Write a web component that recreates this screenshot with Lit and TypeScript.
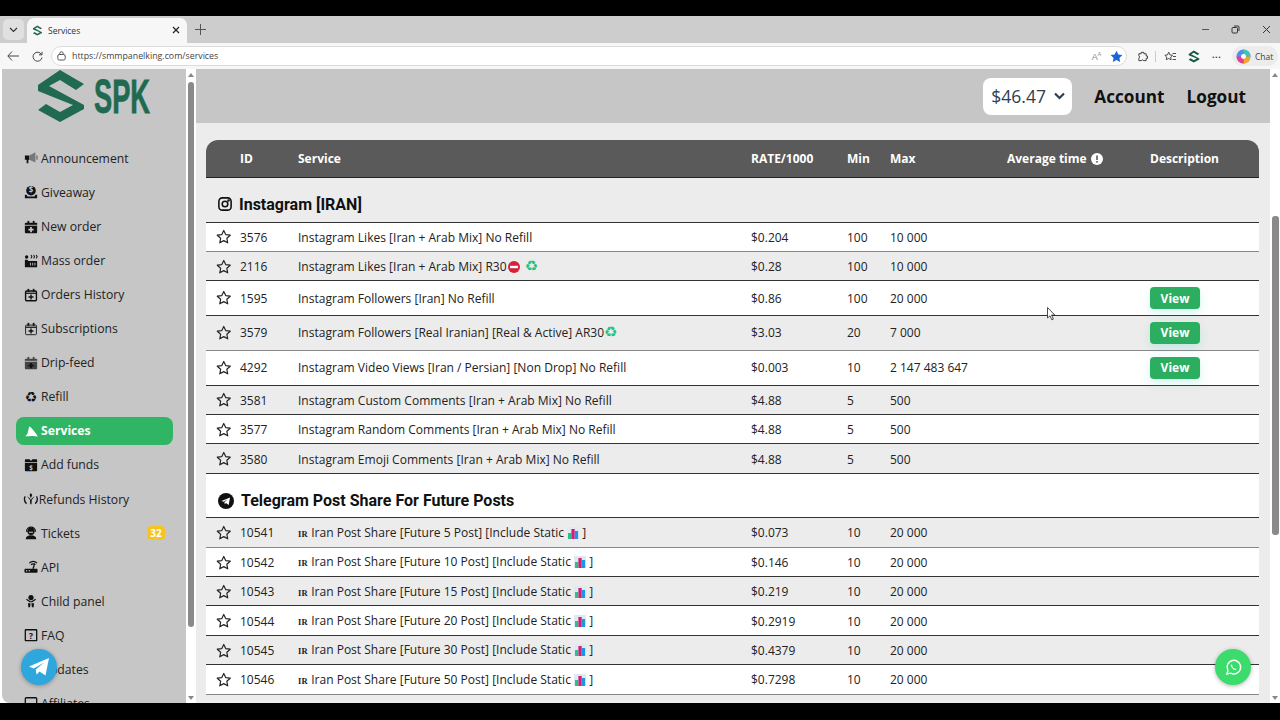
import { LitElement, html, css, svg } from "lit";
import { customElement } from "lit/decorators.js";

const I = (w: number, body: unknown, cls = "ic") =>
  html`<svg class=${cls} viewBox="0 0 ${w} 16" width=${(w * 14) / 16} height="14" fill="currentColor">${body}</svg>`;

const cal = svg`<path d="M2 3h12a1 1 0 0 1 1 1v10a1 1 0 0 1-1 1H2a1 1 0 0 1-1-1V4a1 1 0 0 1 1-1z"/><rect x="4" y="1" width="2" height="3"/><rect x="10" y="1" width="2" height="3"/>`;
const plusW = svg`<path d="M7 8h2v2h2v2H9v2H7v-2H5v-2h2z" fill="#c6c6c6"/>`;
const calLine = (sw: number) => svg`<rect x="1.8" y="3.5" width="12.4" height="11" rx="1" fill="none" stroke="currentColor" stroke-width=${sw}/><path d="M2 6h12" stroke="currentColor" stroke-width="1.4"/><rect x="4" y="1" width="2" height="3.5"/><rect x="10" y="1" width="2" height="3.5"/><path d="M7.2 7.5h1.6v2h2V11h-2v2H7.2v-2h-2V9.5h2z"/>`;

const icons: Record<string, unknown> = {
  Announcement: I(16, svg`<path d="M1 5h5v5l-1 .3V14H3v-4H1z"/><path d="M6 5l7-3.5V13L6 10z" fill="#777"/><rect x="14" y="5" width="1.6" height="5" fill="#777"/>`),
  Giveaway: I(16, svg`<circle cx="8" cy="6.5" r="5.5"/><text x="8" y="9.6" font-size="9" font-weight="700" font-family="Open Sans" text-anchor="middle" fill="#c6c6c6">$</text><path d="M1 11h2l1 2h8l1-2h2v4H1z"/>`),
  "New order": I(16, svg`${cal}<rect x="1" y="5.5" width="14" height="1" fill="#c6c6c6"/>${plusW}`),
  "Mass order": I(16, svg`<circle cx="3" cy="3.5" r="2"/><path d="M8 1l1 2-1 2M11 1l1 2-1 2M14 1l1 2-1 2" fill="none" stroke="currentColor" stroke-width="1.2"/><path d="M1 6.5h3l1 1.5h10v7H1z"/><path d="M7 10h1v3H7zM9.5 10h1v3h-1zM12 10h1v3h-1z" fill="#c6c6c6"/>`),
  "Orders History": I(16, calLine(1.6)),
  Subscriptions: I(16, calLine(1)),
  "Drip-feed": I(16, svg`<g fill="#444">${cal}</g><rect x="1" y="5.5" width="14" height="1" fill="#c6c6c6"/><path d="M7 8h2v2h2v2H9v2H7v-2H5v-2h2z" fill="#111"/>`),
  Refill: html`<span class="ic glyph">♻</span>`,
  Services: I(16, svg`<path d="M1 14c2-1 3-3 3.500-5C5 7 5.500 4 6 2.500c3 2 6 6 8.500 9.500.4.800.8 1.500 1 2.500-2-.8-4.500-1-7-.8-2.500.2-5 .6-7.500.3z"/>`),
  "Add funds": I(16, svg`<path d="M1 5.500h14V14a1 1 0 0 1-1 1H2a1 1 0 0 1-1-1z"/><path d="M2 1.500h4.500l1.500 2 1.500-2H14a1 1 0 0 1 1 1V4.500H1V2.500a1 1 0 0 1 1-1z"/><text x="8" y="13.500" font-size="7" font-weight="700" font-family="Open Sans" text-anchor="middle" fill="#c6c6c6">$</text>`),
  "Refunds History": I(18, svg`<path d="M2.500 5C1 8 1.500 11 4 13.500M15.500 5c1.500 3 1 6-1.500 8.500" fill="none" stroke="currentColor" stroke-width="1.500"/><path d="M9 1l1.500 2.500L9 7 7.500 3.500zM4.500 4.500L8 9l.3 5h1.400l.3-5 3.500-4.500L10 7.500 9 9 8 7.500z"/>`, "ic wide"),
  Tickets: I(16, svg`<circle cx="8" cy="6" r="4.200"/><path d="M2.800 6.500a5.200 5.200 0 0 1 10.400 0" fill="none" stroke="currentColor" stroke-width="1.300"/><path d="M2 15c0-3 2.500-4.300 6-4.300s6 1.300 6 4.300z"/><rect x="5.500" y="6.500" width="5" height="1.300" rx=".6" fill="#c6c6c6"/>`),
  API: I(16, svg`<rect x=".5" y="10" width="15" height="4.500" rx="1"/><path d="M9.500 10l2-6h1.300l-1.500 6z"/><circle cx="3" cy="12.200" r=".8" fill="#c6c6c6"/><circle cx="6" cy="12.200" r=".8" fill="#c6c6c6"/><path d="M6 3.500a7 7 0 0 1 9 0M8 5.500a4 4 0 0 1 5 0" fill="none" stroke="currentColor" stroke-width="1.300"/>`),
  "Child panel": I(16, svg`<circle cx="8" cy="4" r="3"/><path d="M3 5.500l5 3 5-3 .6 1.200L9.500 9.500h-3L2.400 6.700z"/><path d="M4.500 10.500H7.500L7 15H5zM8.500 10.500h3L11 15H9z"/>`),
  FAQ: I(16, svg`<rect x="1.500" y="2" width="13" height="12.500" rx=".6" fill="none" stroke="currentColor" stroke-width="1.500"/><text x="8" y="12" font-size="9.500" font-weight="700" font-family="Open Sans" text-anchor="middle">?</text>`),
  Updates: I(16, svg`<circle cx="8" cy="8" r="6"/>`),
  Affiliates: I(16, svg`<rect x="1.500" y="2" width="13" height="12.500" rx="1" fill="none" stroke="currentColor" stroke-width="1.500"/>`),
};

const nav = ["Announcement","Giveaway","New order","Mass order","Orders History","Subscriptions","Drip-feed","Refill","Services","Add funds","Refunds History","Tickets","API","Child panel","FAQ","Updates","Affiliates"];

const chart = html`<svg class="emoji" viewBox="0 0 12 12" width="12" height="12"><rect width="12" height="12" fill="#dfe9ee"/><rect x="1" y="6" width="3.300" height="6" fill="#2bbf8a"/><rect x="4.400" y="2" width="3.300" height="10" fill="#d81b7a"/><rect x="7.800" y="4" width="3.300" height="8" fill="#2196e0"/></svg>`;
const stop = html`<svg class="emoji stop" viewBox="0 0 12 12" width="12" height="12"><circle cx="6" cy="6" r="6" fill="#d8203a"/><rect x="2" y="4.800" width="8" height="2.400" fill="#fff"/></svg>`;
const recycle = html`<span class="rec">♻</span>`;

type Row = { id: string; name: unknown; rate: string; min: string; max: string; view?: boolean; soft?: boolean };
const IG: Row[] = [
  { id: "3576", name: "Instagram Likes [Iran + Arab Mix] No Refill", rate: "$0.204", min: "100", max: "10 000", soft: true },
  { id: "2116", name: html`Instagram Likes [Iran + Arab Mix] R30${stop} ${recycle}`, rate: "$0.28", min: "100", max: "10 000" },
  { id: "1595", name: "Instagram Followers [Iran] No Refill", rate: "$0.86", min: "100", max: "20 000", view: true },
  { id: "3579", name: html`Instagram Followers [Real Iranian] [Real & Active] AR30${recycle}`, rate: "$3.03", min: "20", max: "7 000", view: true, soft: true },
  { id: "4292", name: "Instagram Video Views [Iran / Persian] [Non Drop] No Refill", rate: "$0.003", min: "10", max: "2 147 483 647", view: true },
  { id: "3581", name: "Instagram Custom Comments [Iran + Arab Mix] No Refill", rate: "$4.88", min: "5", max: "500" },
  { id: "3577", name: "Instagram Random Comments [Iran + Arab Mix] No Refill", rate: "$4.88", min: "5", max: "500" },
  { id: "3580", name: "Instagram Emoji Comments [Iran + Arab Mix] No Refill", rate: "$4.88", min: "5", max: "500" },
];
const tg = (id: string, n: number, rate: string, soft = false): Row => ({
  id,
  name: html`<span class="flag">IR</span> Iran Post Share [Future ${n} Post] [Include Static ${chart} ]`,
  rate, min: "10", max: "20 000", soft,
});
const TG: Row[] = [
  tg("10541", 5, "$0.073", true), tg("10542", 10, "$0.146"), tg("10543", 15, "$0.219"),
  tg("10544", 20, "$0.2919"), tg("10545", 30, "$0.4379"), tg("10546", 50, "$0.7298", true),
];

const star = html`<svg class="star" viewBox="0 0 16 16" width="15.500" height="15.500" fill="none" stroke="#222" stroke-width="1.200" stroke-linejoin="round"><path d="M8 1.500l2 4.300 4.700.6-3.500 3.200.9 4.700L8 12l-4.100 2.300.9-4.700L1.300 6.400 6 5.800z"/></svg>`;

const sLogo = (c: string) => svg`<polygon fill=${c} points="38,85 60,70 84,84 76,90 60,80 49,86 84,105 84,109 60,122 38,110 46,104 60,112 73,105 38,91"/>`;

@customElement("app-root")
export class AppRoot extends LitElement {
  static styles = css`
    :host { display: block; width: 1280px; height: 720px; background: #000; overflow: hidden; position: relative; font-family: "Open Sans", sans-serif; color: #1c1c1c; }
    .black { height: 16px; background: #000; }
    .black.bottom { height: 17px; }
    .tabs { height: 27px; background: #cdcdcd; display: flex; align-items: flex-end; padding-left: 3px; }
    .tabdown { width: 21px; height: 21px; background: #e0e0e0; border-radius: 5px; align-self: center; display: flex; align-items: center; justify-content: center; margin-right: 3px; }
    .tab { width: 160px; height: 25px; background: #f7f7f7; border-radius: 7px 7px 0 0; display: flex; align-items: center; padding: 0 7px 1px 5px; box-sizing: border-box; font-size: 8.5px; color: #333; gap: 5px; }
    .tab .sp { flex: 1; }
    .plus { margin-left: 8px; align-self: center; }
    .winbtns { margin-left: auto; display: flex; align-self: center; }
    .winbtns svg { display: block; margin-left: 21px; }
    .winbtns svg:last-child { margin: 0 9px 0 22px; }
    .toolbar { height: 26px; background: #f7f7f7; display: flex; align-items: center; padding-left: 7px; box-sizing: border-box; }
    .back { margin-right: 13px; }
    .addr { width: 1076px; height: 20px; margin-left: 8px; background: #fff; border: 1px solid #dcdcdc; border-radius: 10px; box-sizing: border-box; display: flex; align-items: center; padding: 0 3px 0 5px; font-size: 8.8px; color: #444; gap: 6px; }
    .addr .sp { flex: 1; }
    .tools { display: flex; align-items: center; flex: 1; padding-left: 9.500px; }
    .aicon { font-size: 9px; color: #888; margin-right: 3px; font-family: "Liberation Sans", sans-serif; }
    .aicon sup { font-size: 5px; }
    .sep { width: 1px; height: 11px; background: #ccc; margin: 0 8px 0 7.500px; }
    .fav { margin-left: 12px; }
    .dots { font-size: 9px; font-weight: 700; margin-left: 12px; color: #333; letter-spacing: .5px; line-height: 1; }
    .chat { display: flex; align-items: center; gap: 4px; height: 20px; width: 46px; margin: 0 2px 0 auto; background: #ececec; border-radius: 10px; font-size: 8.5px; color: #444; padding-left: 4px; box-sizing: border-box; }
    .page { height: 634px; background: #fff; display: flex; padding-left: 2px; box-sizing: border-box; }
    .side { width: 184px; background: #c6c6c6; border-radius: 0 0 0 8px; overflow: hidden; padding-left: 14px; box-sizing: border-box; }
    .logo { display: block; margin-left: -14px; height: 75.400px; }
    .logo text { font-family: "Liberation Sans", sans-serif; font-weight: 700; stroke: #1f6a50; stroke-width: .8px; }
    .nav { display: flex; flex-direction: column; gap: 6.070px; width: 157px; }
    .item { flex: none; height: 28px; display: flex; align-items: center; padding: 0 8px; box-sizing: border-box; font-size: 12.200px; color: #222; border-radius: 8px; }
    .item .ic { flex: none; margin-right: 3px; color: #111; }
    .item .ic.wide { margin-left: -1px; margin-right: 0; }
    .item .glyph { font-family: "DejaVu Sans", sans-serif; font-size: 14px; line-height: 14px; width: 14px; text-align: center; }
    .item.active { background: #2fb563; color: #fff; font-weight: 700; }
    .item.active .ic { color: #fff; }
    .badge { margin-left: auto; background: #f6c51d; color: #fff; font-size: 10px; font-weight: 700; border-radius: 4px; width: 18px; height: 14px; display: flex; align-items: center; justify-content: center; }
    .bar { width: 10px; flex: none; background: #fff; display: flex; flex-direction: column; align-items: center; padding: 4px 0 3px; box-sizing: border-box; }
    .up { width: 0; height: 0; border: 3.500px solid transparent; border-top: 0; border-bottom: 4px solid #888; }
    .down { width: 0; height: 0; border: 3.500px solid transparent; border-bottom: 0; border-top: 4px solid #888; margin-top: auto; }
    .thumb { width: 6px; background: #8a8a8a; border-radius: 3px; }
    .thumb.s { height: 545px; margin-top: 5px; }
    .thumb.m { height: 319px; margin-top: 139px; width: 7px; }
    .main { flex: 1; min-width: 0; background: #ececec; overflow: hidden; }
    .head { height: 54px; background: #c6c6c6; display: flex; align-items: center; justify-content: flex-end; padding-right: 24px; gap: 22px; }
    .bal { width: 89px; height: 37px; background: #fff; border-radius: 8px; display: flex; align-items: center; padding-left: 8px; box-sizing: border-box; font-size: 17.500px; color: #2c3e50; gap: 8px; }
    .link { font-size: 17.200px; font-weight: 700; color: #111; }
    .table { margin: 17px 11px 0 10px; }
    .r { display: grid; grid-template-columns: 34px 58px 453px 96px 43px 117px 143px 109px; align-items: center; box-sizing: border-box; border-bottom: 1px solid #333; font-size: 12px; color: #222; }
    .thead { height: 38px; background: #5a5a5a; color: #fff; font-weight: 700; border-radius: 12px 12px 0 0; border-bottom: 1px solid #222; }
    .avg { display: flex; align-items: center; gap: 4px; }
    .row { height: 29.400px; padding-top: 1px; }
    .row.tall { height: 34.750px; padding-top: 0; }
    .row.soft { border-bottom-color: #888; }
    .row.w { background: #fff; }
    .star { margin-left: 10px; display: block; }
    .name { white-space: pre; line-height: 14px; font-size: 12.040px; padding-top: 1px; }
    .emoji { vertical-align: -2px; }
    .stop { margin: 0 1.500px; }
    .rec { font-family: "DejaVu Sans", sans-serif; color: #22c27a; font-size: 15px; line-height: 12px; }
    .flag { font-family: "Liberation Serif", serif; font-weight: 700; font-size: 8.500px; letter-spacing: .3px; }
    .view { width: 50px; height: 22px; border-radius: 4px; background: #2bae60; color: #fff; font-weight: 700; display: flex; align-items: center; justify-content: center; box-shadow: 0 4px 10px rgba(80, 220, 200, .25); }
    .cat { height: 44.500px; display: flex; align-items: center; box-sizing: border-box; padding: 11px 0 0 12px; border-bottom: 1px solid #333; font-family: Roboto, sans-serif; font-weight: 700; font-size: 16px; color: #111; gap: 7px; }
    .cat.white { background: #fff; }
    .cat.first { padding-top: 9px; }
    .fab { position: absolute; width: 36px; height: 36px; border-radius: 50%; display: flex; align-items: center; justify-content: center; box-shadow: 0 1px 4px rgba(0,0,0,.3); }
    .fab.tg { left: 21px; top: 649px; background: #2fa7dc; }
    .fab.wa { left: 1215px; top: 649px; background: #3bdc6c; }
    .cursor { position: absolute; left: 1047px; top: 307px; }
  `;

  row(r: Row, i: number) {
    const tall = !!r.view;
    return html`<div class="r row ${tall ? "tall" : ""} ${r.soft ? "soft" : ""} ${i ? "" : "w"}">
      ${star}<span>${r.id}</span><span class="name">${r.name}</span><span>${r.rate}</span><span>${r.min}</span><span>${r.max}</span><span></span>
      ${r.view ? html`<div class="view">View</div>` : html`<span></span>`}
    </div>`;
  }

  render() {
    return html`
      <div class="black"></div>
      <div class="tabs">
        <div class="tabdown"><svg width="9" height="6" viewBox="0 0 9 6" fill="none" stroke="#333" stroke-width="1.200"><path d="M1 1l3.500 3.500L8 1"/></svg></div>
        <div class="tab">
          <svg width="11" height="11" viewBox="36 68 50 56">${sLogo("#1f6a50")}</svg>
          <span>Services</span><span class="sp"></span>
          <svg width="8" height="8" viewBox="0 0 8 8" stroke="#222" stroke-width="1.200"><path d="M1 1l6 6M7 1L1 7"/></svg>
        </div>
        <svg class="plus" width="11" height="11" viewBox="0 0 11 11" stroke="#555" stroke-width="1"><path d="M5.500 0v11M0 5.500h11"/></svg>
        <div class="winbtns">
          <svg width="9" height="9" viewBox="0 0 9 9" stroke="#555"><path d="M1 4.500h7"/></svg>
          <svg width="9" height="9" viewBox="0 0 9 9" fill="none" stroke="#333"><rect x="1" y="2.500" width="5.500" height="5.500" rx="1"/><path d="M3 1h4a1 1 0 0 1 1 1v4"/></svg>
          <svg width="9" height="9" viewBox="0 0 9 9" stroke="#333"><path d="M1 1l7 7M8 1L1 8"/></svg>
        </div>
      </div>
      <div class="toolbar">
        <svg class="back" width="12" height="10" viewBox="0 0 12 10" fill="none" stroke="#444" stroke-width="1"><path d="M5 .5L.8 5 5 9.500M1 5h11"/></svg>
        <svg width="11" height="11" viewBox="0 0 11 11" fill="none" stroke="#444" stroke-width="1"><path d="M9.500 3.500A4.500 4.500 0 1 0 10 6.500M10 .8v3H7"/></svg>
        <div class="addr">
          <svg width="9" height="10" viewBox="0 0 9 10" fill="none" stroke="#444" stroke-width=".9"><rect x=".8" y="3.500" width="7.400" height="5.500" rx="1.500"/><path d="M2.800 3.500V2.500a1.700 1.700 0 0 1 3.400 0v1"/></svg>
          <span>https://smmpanelking.com/services</span><span class="sp"></span>
          <span class="aicon">A<sup>A</sup></span>
          <svg width="13" height="13" viewBox="0 0 16 16" fill="#1d63d8"><path d="M8 1l2.200 4.600 5 .7-3.600 3.500.9 5L8 12.400l-4.500 2.400.9-5L.8 6.300l5-.7z"/></svg>
        </div>
        <div class="tools">
          <svg width="11" height="11" viewBox="0 0 12 12" fill="none" stroke="#333" stroke-width="1"><path d="M4.500 1.500h3v1.500h2.500v2.500h1.500v2.500h-1.500v2.500h-2.500a2 2 0 0 0-3 0H2V8a2 2 0 0 0 0-3V3h2.500z"/></svg>
          <div class="sep"></div>
          <svg width="12" height="11" viewBox="0 0 14 12" fill="none" stroke="#333" stroke-width="1"><path d="M5.500 1L7 4.200l3 .4-2.200 2.100.5 3-2.800-1.400L2.700 9.700l.5-3L1 4.600l3-.4zM10 2.500h4M10.500 6H14M10 9.500h4"/></svg>
          <svg class="fav" width="12" height="13" viewBox="36 68 50 56">${sLogo("#14593f")}</svg>
          <span class="dots">···</span>
          <div class="chat">
            <svg width="15" height="15" viewBox="0 0 14 14"><circle cx="7" cy="7" r="6.500" fill="#4f8df0"/><path d="M7 .5A6.500 6.500 0 0 1 13.500 7H7z" fill="#3fc6b0"/><path d="M7 7h6.500A6.500 6.500 0 0 1 7 13.500z" fill="#f5a623"/><path d="M7 7v6.500A6.500 6.500 0 0 1 .5 7z" fill="#e2408f"/><circle cx="7" cy="7" r="2.300" fill="#fff"/></svg>
            <span>Chat</span>
          </div>
        </div>
      </div>
      <div class="page">
        <aside class="side">
          <svg class="logo" width="170" height="75.400" viewBox="2 69 170 75.400">
            ${sLogo("#1f6a50")}
            <text x="94" y="113" font-size="49" textLength="56" lengthAdjust="spacingAndGlyphs" fill="#1f6a50">SPK</text>
          </svg>
          <nav class="nav">
            ${nav.map((n) => html`<div class="item ${n === "Services" ? "active" : ""}">${icons[n]}<span>${n}</span>${n === "Tickets" ? html`<span class="badge">32</span>` : ""}</div>`)}
          </nav>
        </aside>
        <div class="bar"><div class="up"></div><div class="thumb s"></div><div class="down"></div></div>
        <main class="main">
          <header class="head">
            <div class="bal"><span>$46.47</span><svg width="11" height="8" viewBox="0 0 11 8" fill="none" stroke="#2c3e50" stroke-width="2.200"><path d="M1 1.500l4.500 4.500L10 1.500"/></svg></div>
            <span class="link">Account</span><span class="link">Logout</span>
          </header>
          <section class="table">
            <div class="r thead"><span></span><span>ID</span><span>Service</span><span>RATE/1000</span><span>Min</span><span>Max</span>
              <span class="avg">Average time <svg width="12" height="12" viewBox="0 0 12 12"><circle cx="6" cy="6" r="6" fill="#fff"/><rect x="5.200" y="2.500" width="1.600" height="4.500" fill="#5a5a5a"/><rect x="5.200" y="8" width="1.600" height="1.600" fill="#5a5a5a"/></svg></span>
              <span>Description</span></div>
            <div class="cat first">
              <svg width="14" height="14" viewBox="0 0 16 16" fill="none" stroke="#111" stroke-width="1.800"><rect x="1" y="1" width="14" height="14" rx="4"/><circle cx="8" cy="8" r="3.200"/><circle cx="12" cy="4" r=".6" fill="#111"/></svg>
              <span>Instagram [IRAN]</span>
            </div>
            ${IG.map((r, i) => this.row(r, i % 2))}
            <div class="cat white">
              <svg width="16" height="16" viewBox="0 0 16 16"><circle cx="8" cy="8" r="8" fill="#111"/><path d="M3.500 8l8.500-3.500-1.300 7.500-2.700-2-1.200 1.200-.4-2.200 3.500-2.800-4.500 2.500z" fill="#fff"/></svg>
              <span>Telegram Post Share For Future Posts</span>
            </div>
            ${TG.map((r, i) => this.row(r, i % 2 ? 0 : 1))}
          </section>
        </main>
        <div class="bar"><div class="up"></div><div class="thumb m"></div><div class="down"></div></div>
      </div>
      <div class="black bottom"></div>
      <div class="fab tg"><svg width="22" height="20" viewBox="0 0 22 20"><path d="M1 9.500L21 1l-3.500 17.500-6-4-3 3-.8-5 8.500-7-10.500 6z" fill="#fff"/></svg></div>
      <div class="fab wa"><svg width="17" height="17" viewBox="0 0 18 18" fill="none" stroke="#fff" stroke-width="1.500"><path d="M2 16l1.100-3.800A7.200 7.200 0 1 1 6 15z"/><path d="M6.500 5.500c-1 1 0 3 1.500 4.500s3.200 2.200 4.200 1.200l-1.500-1.500-1 .5-2-2 .4-1z" fill="#fff" stroke="none"/></svg></div>
      <svg class="cursor" width="9" height="14" viewBox="0 0 9 14" fill="#fff" stroke="#222" stroke-width=".8"><path d="M.5.500v10.500l2.500-2.200 1.800 4 1.600-.7-1.800-4h3.200z"/></svg>
    `;
  }
}
